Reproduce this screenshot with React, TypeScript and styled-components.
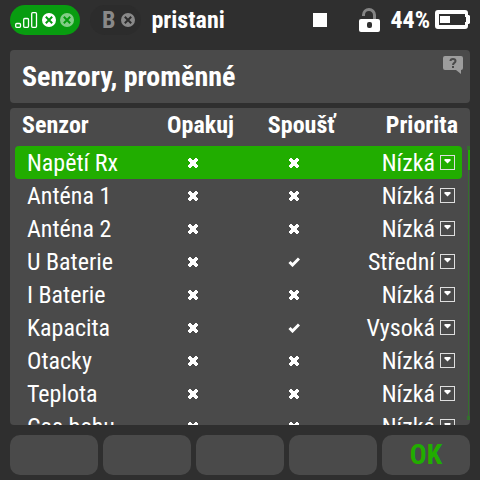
import React, { useState } from "react";
import styled, { createGlobalStyle } from "styled-components";

const GlobalStyle = createGlobalStyle`
  *, *::before, *::after { box-sizing: border-box; }
  body {
    margin: 0;
    background: #2f2f2f;
    color: #fff;
    font-family: "Roboto Condensed", "Liberation Sans Narrow", "Roboto", sans-serif;
  }
  button, input, select { font: inherit; color: inherit; margin: 0; }
`;

const Screen = styled.div`
  display: flex;
  flex-direction: column;
  height: 100vh;
  padding: 0 10px 5px;
`;

const StatusBar = styled.header`
  display: flex;
  align-items: center;
  height: 40px;
  margin-bottom: 10px;
  font-size: 24px;
  line-height: 30px;
  font-weight: 700;
`;

const Receiver = styled.div<{ $active?: boolean }>`
  display: flex;
  align-items: center;
  gap: ${(p) => (p.$active ? 4 : 6)}px;
  height: 30px;
  padding: ${(p) => (p.$active ? "0 6px 0 5px" : "0 6px 0 12px")};
  border-radius: 15px;
  background: ${(p) => (p.$active ? "#089c10" : "#2c2c2c")};
  color: #898989;
  margin-right: 10px;
`;

const ModelName = styled.span`
  flex: 1;
`;

const StatusIcons = styled.div`
  display: flex;
  align-items: center;
`;

const StopSquare = styled.span`
  width: 14px;
  height: 14px;
  margin-right: 32px;
  background: #fff;
`;

const BatteryLevel = styled.span`
  margin: 0 5px 0 10px;
`;

const TitlePanel = styled.div`
  display: flex;
  align-items: flex-start;
  justify-content: space-between;
  flex: none;
  min-height: 53px;
  padding: 5px 7px 4px 12px;
  margin-bottom: 5px;
  border-radius: 4px;
  background: #4a4a4a;
`;

const Title = styled.h1`
  margin: 0;
  font-size: 28px;
  line-height: 44px;
  font-weight: 700;
`;

const HelpButton = styled.button`
  display: flex;
  padding: 0;
  border: 0;
  background: none;
`;

const ListPanel = styled.main`
  display: flex;
  flex: 1;
  min-height: 0;
  gap: 5px;
  padding-left: 5px;
  border-radius: 4px;
  background: #4a4a4a;
  overflow: hidden;
`;

const ListViewport = styled.div`
  flex: 1;
  overflow: hidden;
`;

const SensorTable = styled.table`
  width: 100%;
  table-layout: fixed;
  border-collapse: separate;
  border-spacing: 0;
  font-size: 24px;
  line-height: 31px;
`;

const FlagCol = styled.col`
  width: 101px;
`;

const NameCol = styled.col`
  width: 127px;
`;

const HeadCell = styled.th<{ $align?: "left" | "center" | "right" }>`
  height: 38px;
  padding: ${(p) =>
    p.$align === "center" ? "0 0 4px 16px" : p.$align === "right" ? "0 4px 4px 0" : "0 0 4px 7px"};
  text-align: ${(p) => p.$align ?? "left"};
  font-weight: 700;
  white-space: nowrap;
`;

const Row = styled.tr<{ $selected: boolean }>`
  & > * {
    height: 33px;
    background: ${(p) => (p.$selected ? "#21ad00" : "transparent")};
  }
  & > :first-child { border-radius: 4px 0 0 4px; }
  & > :last-child { border-radius: 0 4px 4px 0; }
`;

const NameCell = styled.th`
  padding: 2px 0 0 12px;
  text-align: left;
  font-weight: 400;
  white-space: nowrap;
`;

const Cell = styled.td`
  padding: 0;
`;

const Overlap = styled.label`
  display: grid;
  align-items: center;
  justify-items: center;
  height: 33px;
  & > * { grid-area: 1 / 1; }
`;

const HiddenCheck = styled.input`
  width: 24px;
  height: 24px;
  opacity: 0;
`;

const PriorityField = styled(Overlap)`
  justify-items: end;
  padding-right: 7px;
`;

const PrioritySelect = styled.select`
  appearance: none;
  width: 100%;
  height: 33px;
  padding: 2px 20px 0 0;
  border: 0;
  outline: 0;
  background: transparent;
  text-align: right;
  text-align-last: right;
  option { color: #000; }
`;

const DropIcon = styled.svg`
  pointer-events: none;
`;

const ScrollTrack = styled.div`
  width: 3px;
  margin: 38px 0 5px;
  border: solid #33702c;
  border-width: 4px 0;
  background: linear-gradient(to right, transparent 1px, #33702c 1px, #33702c 2px, transparent 2px);
`;

const ScrollThumb = styled.div`
  height: 20px;
  margin-left: 1px;
  background: #21ad00;
`;

const SoftKeys = styled.footer`
  display: grid;
  grid-template-columns: repeat(5, 1fr);
  gap: 5px;
  flex: none;
  margin-top: 10px;
`;

const SoftKey = styled.button`
  height: 40px;
  padding: 0;
  border: 0;
  border-radius: 10px;
  background: #4a4a4a;
  color: #21ad00;
  font-size: 28px;
  line-height: 38px;
  font-weight: 700;
`;

const SignalBars = () => (
  <svg width="23" height="16" viewBox="0 0 23 16" fill="none" stroke="#fff" strokeWidth="1.3" aria-hidden="true">
    <rect x="0.7" y="11.500" width="4.800" height="3.800" rx="1" />
    <rect x="8.700" y="6.500" width="4.800" height="8.800" rx="1" />
    <rect x="16.700" y="0.700" width="4.800" height="14.600" rx="1" />
  </svg>
);

const RoundCross = ({ fill, cross }: { fill: string; cross: string }) => (
  <svg width="14" height="14" viewBox="0 0 14 14" aria-hidden="true">
    <circle cx="7" cy="7" r="7" fill={fill} />
    <path d="M3.8 3.8l6.4 6.4M10.2 3.8l-6.4 6.4" stroke={cross} strokeWidth="2" />
  </svg>
);

const OpenLock = () => (
  <svg width="21" height="24" viewBox="0 0 21 24" role="img" aria-label="Odemčeno">
    <path d="M4.5 8V7a5.5 5.5 0 0 1 11 0v5" fill="none" stroke="#858585" strokeWidth="3" />
    <rect y="11" width="21" height="13" rx="2" fill="#fff" />
    <rect x="8" y="14" width="5" height="6" rx="2" fill="#2f2f2f" />
  </svg>
);

const Battery = () => (
  <svg width="35" height="20" viewBox="0 0 35 20" aria-hidden="true">
    <path
      d="M3 0h27a3 3 0 0 1 3 3v2h1l1 1v7l-1 1h-1v2a3 3 0 0 1-3 3H3a3 3 0 0 1-3-3V3a3 3 0 0 1 3-3zM4 4v11h26v-3h1V7h-1V4z"
      fill="#fff"
      fillRule="evenodd"
    />
    <rect x="5" y="6" width="10" height="7" fill="#fff" />
  </svg>
);

const HelpIcon = () => (
  <svg width="20" height="19" viewBox="0 0 20 19" aria-hidden="true">
    <path d="M2 1h16a2 2 0 0 1 2 2v10a2 2 0 0 1-2 2v4l-5-4H2a2 2 0 0 1-2-2V3a2 2 0 0 1 2-2z" fill="#9d9d9d" />
    <path d="M7.500 6q0-2 2.500-2t2.500 2q0 1-1.200 1.800T10 10" fill="none" stroke="#4a4a4a" strokeWidth="2" />
    <rect x="9" y="11" width="2" height="2" fill="#4a4a4a" />
  </svg>
);

const CrossMark = () => (
  <svg width="10" height="10" viewBox="0 0 10 10" shapeRendering="crispEdges" aria-hidden="true">
    <path d="M1 0h2v1h1v1h2V1h1V0h2v1h1v2H9v1H8v2h1v1h1v2H9v1H7V9H6V8H4v1H3v1H1V9H0V7h1V6h1V4H1V3H0V1h1z" fill="#fff" />
  </svg>
);

const TickMark = () => (
  <svg width="12" height="10" viewBox="0 0 12 10" aria-hidden="true">
    <path d="M1.500 5l3 3 6.500-6.500" fill="none" stroke="#fff" strokeWidth="3" />
  </svg>
);

type Priority = "Nízká" | "Střední" | "Vysoká";
const PRIORITIES: Priority[] = ["Nízká", "Střední", "Vysoká"];

interface Sensor {
  name: string;
  repeat: boolean;
  trigger: boolean;
  priority: Priority;
}

const SENSORS: Sensor[] = [
  { name: "Napětí Rx", repeat: false, trigger: false, priority: "Nízká" },
  { name: "Anténa 1", repeat: false, trigger: false, priority: "Nízká" },
  { name: "Anténa 2", repeat: false, trigger: false, priority: "Nízká" },
  { name: "U Baterie", repeat: false, trigger: true, priority: "Střední" },
  { name: "I Baterie", repeat: false, trigger: false, priority: "Nízká" },
  { name: "Kapacita", repeat: false, trigger: true, priority: "Vysoká" },
  { name: "Otacky", repeat: false, trigger: false, priority: "Nízká" },
  { name: "Teplota", repeat: false, trigger: false, priority: "Nízká" },
  { name: "Cas behu", repeat: false, trigger: false, priority: "Nízká" },
];

function Flag({ label, initial }: { label: string; initial: boolean }) {
  const [on, setOn] = useState(initial);
  return (
    <Overlap>
      <HiddenCheck type="checkbox" aria-label={label} checked={on} onChange={() => setOn(!on)} />
      {on ? <TickMark /> : <CrossMark />}
    </Overlap>
  );
}

function SensorRow({ sensor, selected }: { sensor: Sensor; selected: boolean }) {
  return (
    <Row $selected={selected}>
      <NameCell scope="row">{sensor.name}</NameCell>
      <Cell>
        <Flag label={`Opakuj ${sensor.name}`} initial={sensor.repeat} />
      </Cell>
      <Cell>
        <Flag label={`Spoušť ${sensor.name}`} initial={sensor.trigger} />
      </Cell>
      <Cell>
        <PriorityField>
          <PrioritySelect aria-label={`Priorita ${sensor.name}`} defaultValue={sensor.priority}>
            {PRIORITIES.map((p) => (
              <option key={p}>{p}</option>
            ))}
          </PrioritySelect>
          <DropIcon width="15" height="15" viewBox="0 0 15 15" aria-hidden="true">
            <rect x="0.5" y="0.5" width="14" height="14" fill="none" stroke="#dedede" />
            <path d="M4.500 4h6v1.500l-3 3-3-3z" fill="#fff" />
          </DropIcon>
        </PriorityField>
      </Cell>
    </Row>
  );
}

export default function App() {
  return (
    <>
      <GlobalStyle />
      <Screen>
        <StatusBar>
          <Receiver $active>
            <SignalBars />
            <RoundCross fill="#fff" cross="#089c10" />
            <RoundCross fill="#83cd87" cross="#089c10" />
          </Receiver>
          <Receiver>
            B
            <RoundCross fill="#898989" cross="#2c2c2c" />
          </Receiver>
          <ModelName>pristani</ModelName>
          <StatusIcons>
            <StopSquare />
            <OpenLock />
            <BatteryLevel>44%</BatteryLevel>
            <Battery />
          </StatusIcons>
        </StatusBar>
        <TitlePanel>
          <Title>Senzory, proměnné</Title>
          <HelpButton type="button" aria-label="Nápověda">
            <HelpIcon />
          </HelpButton>
        </TitlePanel>
        <ListPanel>
          <ListViewport>
            <SensorTable>
              <colgroup>
                <NameCol />
                <FlagCol />
                <FlagCol />
                <col />
              </colgroup>
              <thead>
                <tr>
                  <HeadCell scope="col">Senzor</HeadCell>
                  <HeadCell scope="col" $align="center">Opakuj</HeadCell>
                  <HeadCell scope="col" $align="center">Spoušť</HeadCell>
                  <HeadCell scope="col" $align="right">Priorita</HeadCell>
                </tr>
              </thead>
              <tbody>
                {SENSORS.map((sensor, i) => (
                  <SensorRow key={sensor.name} sensor={sensor} selected={i === 0} />
                ))}
              </tbody>
            </SensorTable>
          </ListViewport>
          <ScrollTrack>
            <ScrollThumb />
          </ScrollTrack>
        </ListPanel>
        <SoftKeys>
          {["", "", "", "", "OK"].map((label, i) => (
            <SoftKey key={i} type="button" aria-label={label || `F${i + 1}`}>
              {label}
            </SoftKey>
          ))}
        </SoftKeys>
      </Screen>
    </>
  );
}
